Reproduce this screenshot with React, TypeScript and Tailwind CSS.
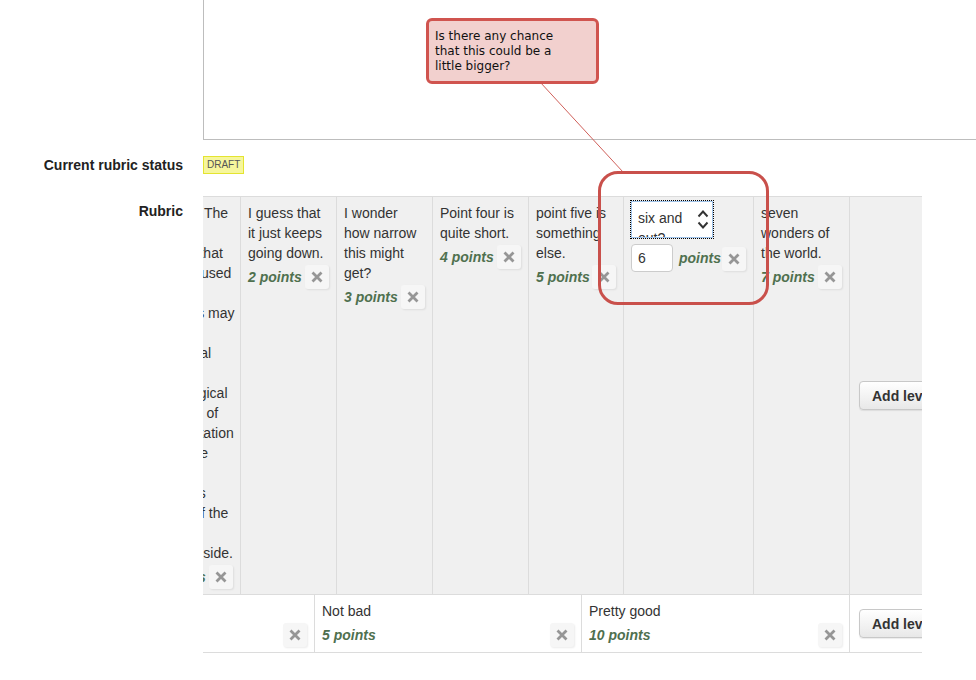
import React from "react";

const firstLevel = [
  "answer. The",
  "student",
  "implies that",
  "models used",
  "were",
  "answers may",
  "include",
  "no critical",
  "thinking",
  "pedagogical",
  "analysis of",
  "interpretation",
  "evidence",
  "which",
  "supports",
  "points of the",
  "other",
  "winning side.",
];

function XButton() {
  return (
    <button
      type="button"
      className="flex h-[24px] w-[24px] shrink-0 items-center justify-center rounded-[3px] bg-[#f6f6f6] shadow-[1px_1px_2px_rgba(0,0,0,0.08)]"
    >
      <svg width="12" height="12" viewBox="0 0 12 12" aria-hidden="true">
        <path d="M1.5 1.5 10.5 10.5M10.5 1.5 1.5 10.5" stroke="#969696" strokeWidth="2.8" />
      </svg>
    </button>
  );
}

function Points({ label }: { label: string }) {
  return (
    <div className="mt-[2px] flex h-[24px] items-center">
      <span className="whitespace-nowrap font-bold italic text-[#4f704f]">{label}</span>
      <span className="ml-auto">
        <XButton />
      </span>
    </div>
  );
}

function Level({ width, text, n }: { width: string; text: string; n: number }) {
  return (
    <div className={`${width} shrink-0 border-r border-[#dcdcdc] px-[7px] pt-[6px] pb-[5px]`}>
      <div>{text}</div>
      <Points label={n === 1 ? "1 point" : `${n} points`} />
    </div>
  );
}

function AddLevel() {
  return (
    <div className="flex w-[110px] shrink-0 items-center px-[9px]">
      <button
        type="button"
        className="h-[29px] whitespace-nowrap rounded-[4px] border border-[#c8c8c8] bg-gradient-to-b from-white to-[#e8e8e8] px-[12px] font-bold text-[#333] shadow-[0_1px_1px_rgba(0,0,0,0.08)]"
      >
        Add level
      </button>
    </div>
  );
}

export default function App() {
  return (
    <div className="relative h-[680px] w-[976px] overflow-hidden bg-white font-['Liberation_Sans',Arial,sans-serif] text-[14px] leading-[20px] text-[#333]">
      <div className="flex">
        <div className="w-[203px] shrink-0" />
        <div className="-mt-px h-[141px] w-[800px] shrink-0 border border-[#bdbdbd] bg-white" />
      </div>

      <div className="mt-[15px] flex items-center">
        <div className="w-[183px] shrink-0 text-right font-bold text-[#222]">
          Current rubric status
        </div>
        <div className="ml-[20px] flex">
          <span className="inline-block border border-[#e4e430] bg-[#f6f69c] px-[3px] text-[10px] leading-[16px] text-[#555]">
            DRAFT
          </span>
        </div>
      </div>

      <div className="mt-[21px] flex">
        <div className="w-[183px] shrink-0 pt-[5px] text-right font-bold text-[#222]">Rubric</div>
        <div className="ml-[20px] w-[719px] overflow-hidden">
          <div className="-ml-[58px] w-max">
            <div className="flex border-y border-[#dcdcdc] bg-[#f0f0f0]">
              <div className="w-[96px] shrink-0 border-r border-[#dcdcdc] px-[7px] pt-[6px] pb-[5px]">
                {firstLevel.map((line) => (
                  <div key={line} className="whitespace-nowrap">
                    {line}
                  </div>
                ))}
                <Points label="1 points" />
              </div>
              <Level width="w-[96px]" text="I guess that it just keeps going down." n={2} />
              <Level width="w-[96px]" text="I wonder how narrow this might get?" n={3} />
              <Level width="w-[96px]" text="Point four is quite short." n={4} />
              <Level width="w-[95px]" text="point five is something else." n={5} />
              <div className="w-[130px] shrink-0 border-r border-[#dcdcdc] px-[7px] pt-[6px] pb-[5px]">
                <div className="-mt-[2px] flex h-[37px] w-[82px] overflow-hidden border border-[#9fc3ea] bg-white outline-1 outline-dotted outline-black">
                  <div className="flex-1 px-[6px] pt-[6px]">six and out?</div>
                  <div className="flex w-[18px] flex-col items-center justify-between py-[7px]">
                    <svg width="12" height="9" viewBox="0 0 12 9" aria-hidden="true">
                      <path d="M1.5 7.5 6 2.5l4.5 5" fill="none" stroke="#333" strokeWidth="1.9" />
                    </svg>
                    <svg width="12" height="9" viewBox="0 0 12 9" aria-hidden="true">
                      <path d="M1.5 1.5 6 6.5l4.5-5" fill="none" stroke="#333" strokeWidth="1.9" />
                    </svg>
                  </div>
                </div>
                <div className="mt-[6px] flex items-center">
                  <div className="h-[28px] w-[42px] rounded-[4px] border border-[#cccccc] bg-white px-[6px] leading-[26px]">
                    6
                  </div>
                  <span className="ml-[6px] font-bold italic text-[#4f704f]">points</span>
                  <span className="ml-auto mt-[2px]">
                    <XButton />
                  </span>
                </div>
              </div>
              <Level width="w-[96px]" text="seven wonders of the world." n={7} />
              <AddLevel />
            </div>

            <div className="flex border-b border-[#dcdcdc] bg-white">
              <Level width="w-[170px]" text="Poor" n={1} />
              <Level width="w-[267px]" text="Not bad" n={5} />
              <Level width="w-[268px]" text="Pretty good" n={10} />
              <AddLevel />
            </div>
          </div>
        </div>
      </div>

      <svg
        className="pointer-events-none absolute left-0 top-0"
        width="976"
        height="680"
        aria-hidden="true"
      >
        <line x1="540" y1="82" x2="623" y2="172" stroke="#d0605a" strokeWidth="1" />
      </svg>

      <div className="pointer-events-none absolute left-[598px] top-[171px] h-[134px] w-[171px] rounded-[20px] border-[3px] border-[#c9504b]" />

      <div className="absolute left-[426px] top-[18px] h-[66px] w-[173px] rounded-[6px] border-[3px] border-[#d0544f] bg-[#f2d0ce] px-[6px] pt-[8px] font-['DejaVu_Sans',sans-serif] text-[12px] leading-[15px] text-[#111]">
        Is there any chance
        <br />
        that this could be a
        <br />
        little bigger?
      </div>
    </div>
  );
}
